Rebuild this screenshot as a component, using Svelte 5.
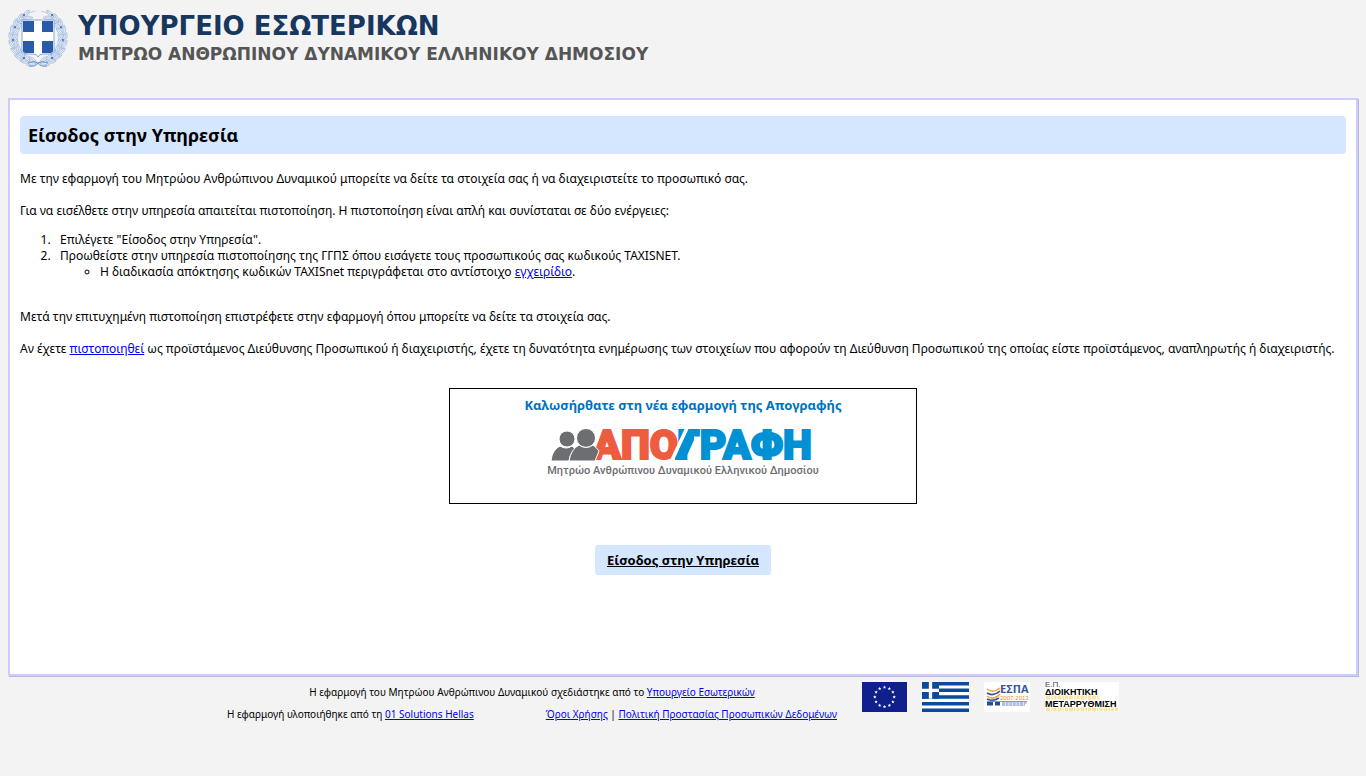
<script>
  const center = { x: 30, y: 30 };

  // Laurel leaves, mirrored on both sides of the shield
  const leaves = [];
  for (let i = 0; i < 10; i++) {
    const angle = 104 + i * 15.5;
    const rad = (angle * Math.PI) / 180;
    for (const [radius, tilt] of [[27, -22], [22.5, 24]]) {
      leaves.push({
        x: center.x + radius * Math.cos(rad),
        y: center.y + radius * Math.sin(rad),
        turn: angle + 90 + tilt
      });
    }
  }

  const stars = Array.from({ length: 12 }, (_, i) => {
    const cx = 22.5 + 9.7 * Math.sin((i * Math.PI) / 6);
    const cy = 15 - 9.7 * Math.cos((i * Math.PI) / 6);
    const points = Array.from({ length: 10 }, (_, k) => {
      const r = k % 2 ? 0.8 : 1.8;
      const a = (k * Math.PI) / 5;
      return `${(cx + r * Math.sin(a)).toFixed(2)},${(cy - r * Math.cos(a)).toFixed(2)}`;
    });
    return points.join(' ');
  });
</script>

<div class="page">
  <header>
    <svg class="emblem" viewBox="0 0 60 60" role="img" aria-label="Ελληνική Δημοκρατία">
      {#snippet branch()}
        <path d="M27 56 C12 55 4 45 4 31 C4 17 13 6 27 3" fill="none" stroke="#a9c0e2" stroke-width="0.8" />
        {#each leaves as leaf}
          <path
            d="M-5 0 Q0 -3.600 5 0 Q0 3.600 -5 0 M-3 0 H3"
            transform="translate({leaf.x} {leaf.y}) rotate({leaf.turn})"
            fill="#f0f3f9"
            stroke="#8dabd8"
            stroke-width="0.6"
          />
        {/each}
        <circle cx="16" cy="7" r="1" fill="#2f5fa8" />
        <circle cx="7" cy="19" r="0.9" fill="#2f5fa8" />
        <circle cx="5" cy="32" r="0.9" fill="#2f5fa8" />
        <circle cx="16" cy="50" r="1" fill="#2f5fa8" />
      {/snippet}
      {@render branch()}
      <g transform="translate(60 0) scale(-1 1)">{@render branch()}</g>
      <path d="M20 55 Q26 52 30 55 Q34 52 40 55 M21 58 Q28 59 30 55 Q32 59 39 58" fill="none" stroke="#6c92ca" />
      <path d="M14 12 H46 V44 Q45 46 41 46 H35 Q31 46 30 49 Q29 46 25 46 H19 Q15 46 14 44 Z" fill="#fff" stroke="#86a6d5" stroke-width="1" />
      <path d="M15 13 H26 V24 H15 Z M34 13 H45 V24 H34 Z M15 33 H26 V45 H19 Q15 45 15 43 Z M34 33 H45 V43 Q45 45 41 45 H34 Z" fill="#2a5ba8" />
    </svg>
    <div>
      <h1>ΥΠΟΥΡΓΕΙΟ ΕΣΩΤΕΡΙΚΩΝ</h1>
      <p class="subtitle">ΜΗΤΡΩΟ ΑΝΘΡΩΠΙΝΟΥ ΔΥΝΑΜΙΚΟΥ ΕΛΛΗΝΙΚΟΥ ΔΗΜΟΣΙΟΥ</p>
    </div>
  </header>

  <main>
    <h2>Είσοδος στην Υπηρεσία</h2>
    <p>Με την εφαρμογή του Μητρώου Ανθρώπινου Δυναμικού μπορείτε να δείτε τα στοιχεία σας ή να διαχειριστείτε το προσωπικό σας.</p>
    <p>Για να εισέλθετε στην υπηρεσία απαιτείται πιστοποίηση. Η πιστοποίηση είναι απλή και συνίσταται σε δύο ενέργειες:</p>
    <ol>
      <li>Επιλέγετε "Είσοδος στην Υπηρεσία".</li>
      <li>
        Προωθείστε στην υπηρεσία πιστοποίησης της ΓΓΠΣ όπου εισάγετε τους προσωπικούς σας κωδικούς TAXISNET.
        <ul>
          <li>Η διαδικασία απόκτησης κωδικών TAXISnet περιγράφεται στο αντίστοιχο <a href="#manual">εγχειρίδιο</a>.</li>
        </ul>
      </li>
    </ol>
    <p>Μετά την επιτυχημένη πιστοποίηση επιστρέφετε στην εφαρμογή όπου μπορείτε να δείτε τα στοιχεία σας.</p>
    <p>Αν έχετε <a href="#certified">πιστοποιηθεί</a> ως προϊστάμενος Διεύθυνσης Προσωπικού ή διαχειριστής, έχετε τη δυνατότητα ενημέρωσης των στοιχείων που αφορούν τη Διεύθυνση Προσωπικού της οποίας είστε προϊστάμενος, αναπληρωτής ή διαχειριστής.</p>

    <section class="banner">
      <h3>Καλωσήρθατε στη νέα εφαρμογή της Απογραφής</h3>
      <svg width="276" height="52" viewBox="-7 0 276 52" role="img" aria-label="Απογραφή">
        <text x="41" y="31" class="mark red">ΑΠΟ</text>
        <text x="125" y="31" class="mark blue">ΓΡΑΦΗ</text>
        <path d="M137 0 L123 30 L120 34 L118 32 L133 0 Z" fill="#fff" />
        <path d="M137 1 H142 V12 L133 32 H123 V30 Z" fill="#0090d4" />
        <g fill="#6d6e71" stroke="#fff" stroke-width="1">
          <circle cx="15" cy="11" r="8" />
          <path d="M-1 33 Q0 22 8 18 Q14 22 20 18 Q23 20 23 22 Q18 25 17 33 Z" />
          <circle cx="34" cy="10" r="9.500" />
          <path d="M17 33 Q19 21 27 17 Q34 22 41 17 Q45 20 47 23 L43 33 Z" />
        </g>
        <text x="131" y="46" class="tagline">Μητρώο Ανθρώπινου Δυναμικού Ελληνικού Δημοσίου</text>
      </svg>
    </section>

    <a class="enter" href="#login">Είσοδος στην Υπηρεσία</a>
  </main>

  <footer>
    <div class="credits">
      <p>Η εφαρμογή του Μητρώου Ανθρώπινου Δυναμικού σχεδιάστηκε από το <a href="#ministry">Υπουργείο Εσωτερικών</a></p>
      <div class="links">
        <span>Η εφαρμογή υλοποιήθηκε από τη <a href="#solutions">01 Solutions Hellas</a></span>
        <span><a href="#terms">Όροι Χρήσης</a> | <a href="#privacy">Πολιτική Προστασίας Προσωπικών Δεδομένων</a></span>
      </div>
    </div>
    <div class="logos">
      <svg width="45" height="30" viewBox="0 0 45 30" role="img" aria-label="Ευρωπαϊκή Ένωση">
        <rect width="45" height="30" fill="#0f1f8c" />
        {#each stars as points}
          <polygon {points} fill="#fff" />
        {/each}
      </svg>
      <svg width="47" height="30" viewBox="0 0 47 30" role="img" aria-label="Ελλάδα">
        <rect width="47" height="30" fill="#fff" />
        <path d="M0 1.700H47 M0 8.300H47 M0 15H47 M0 21.700H47 M0 28.300H47" stroke="#0b4a9c" stroke-width="3.400" />
        <rect width="17" height="16.700" fill="#0b4a9c" />
        <path d="M8.500 0V16.700 M0 8.300H17" stroke="#fff" stroke-width="3.300" />
      </svg>
      <svg width="46" height="30" viewBox="0 0 46 30" role="img" aria-label="ΕΣΠΑ 2007-2013">
        <rect width="46" height="30" fill="#fff" />
        <g fill="none" stroke-width="1.600">
          <path d="M3 7 Q9 12 16 6" stroke="#f3a43c" />
          <path d="M3 11 Q9 15 16 9" stroke="#35549b" />
          <path d="M3 14 Q9 19 16 12" stroke="#f3a43c" />
          <path d="M3 17 Q9 20 15 16" stroke="#35549b" />
        </g>
        <text x="16" y="11" class="espa">ΕΣΠΑ</text>
        <text x="16" y="18" class="years">2007-2013</text>
        <path d="M3 19.500H43" stroke="#35549b" stroke-width="0.6" />
        <path d="M3 20H9V23.500H3Z M11 20H16V23.500H11Z" fill="#2a4b9b" />
        <path d="M18 21H43 M18 23H41" stroke="#6680b5" stroke-dasharray="3 0.6" />
      </svg>
      <svg width="74" height="30" viewBox="0 0 74 30" role="img" aria-label="Ε.Π. Διοικητική Μεταρρύθμιση">
        <rect width="74" height="30" fill="#fff" />
        <path d="M1 15.500H55 M1 27.500H73" stroke="#fbe3a0" stroke-width="4" stroke-dasharray="4 1 1.500 1 3 1" />
        <text x="0" y="5" class="ep">Ε.Π.</text>
        <text x="0" y="13" class="reform">ΔΙΟΙΚΗΤΙΚΗ</text>
        <text x="0" y="25" class="reform">ΜΕΤΑΡΡΥΘΜΙΣΗ</text>
      </svg>
    </div>
  </footer>
</div>

<style>
  :global(body) {
    margin: 0;
    background: #f3f3f3;
  }

  .page {
    padding: 8px;
    font-family: "Noto Sans", sans-serif;
    font-size: 12px;
    line-height: 16px;
    color: #000;
  }

  h1, h2, h3, p, ol, ul {
    margin: 0;
  }

  a {
    color: #00e;
  }

  svg {
    overflow: visible;
  }

  header {
    display: flex;
    gap: 10px;
    height: 90px;
    font-family: "DejaVu Sans", sans-serif;
  }

  .emblem {
    width: 60px;
    height: 60px;
    flex: none;
  }

  h1 {
    color: #17375e;
    font-size: 26px;
    line-height: 36px;
  }

  .subtitle {
    color: #555;
    font-size: 17px;
    font-weight: bold;
    line-height: 20px;
  }

  main {
    display: flex;
    flex-direction: column;
    gap: 16px;
    padding: 16px 10px 99px;
    border: 2px solid #ccccff;
    background: #fff;
    box-shadow: 1px 1px 0 #b8b8e0;
  }

  h2 {
    margin-bottom: 1px;
    padding: 0 8px;
    border-radius: 4px;
    background: #d5e6ff;
    font-size: 18px;
    line-height: 38px;
  }

  ol {
    margin: -3px 0 13px;
    padding-left: 40px;
  }

  ol > li::marker {
    content: counter(list-item) ".\a0\a0\a0";
  }

  ul {
    padding-left: 40px;
  }

  ul > li::marker {
    content: normal;
  }

  .banner {
    display: flex;
    flex-direction: column;
    align-items: center;
    gap: 15px;
    box-sizing: border-box;
    width: 468px;
    max-width: 100%;
    min-height: 116px;
    margin: 15px auto 0;
    padding: 8px;
    border: 1px solid #000;
  }

  h3 {
    color: #0073bd;
    font-size: 13px;
  }

  .mark {
    font: 900 41px Roboto, sans-serif;
    stroke-width: 2px;
  }

  .red {
    fill: #ee5c3f;
    stroke: #ee5c3f;
  }

  .blue {
    fill: #0090d4;
    stroke: #0090d4;
  }

  .tagline {
    font: 500 11px Roboto, sans-serif;
    fill: #6d6e71;
    text-anchor: middle;
  }

  .enter {
    align-self: center;
    margin-top: 25px;
    padding: 0 12px;
    border-radius: 2px;
    background: #d5e6ff;
    color: #000;
    font-size: 13px;
    font-weight: bold;
    line-height: 30px;
  }

  footer {
    display: flex;
    justify-content: center;
    gap: 25px;
    padding: 6px 20px 0 0;
    font-size: 10px;
  }

  .credits {
    display: flex;
    flex-direction: column;
    gap: 6px;
    width: 610px;
    padding-top: 2px;
    text-align: center;
  }

  .links {
    display: flex;
    justify-content: space-between;
  }

  .logos {
    display: flex;
    gap: 15px;
  }

  .espa {
    font: bold 11px "Open Sans", sans-serif;
    fill: #35549b;
  }

  .years {
    font: 6px "Liberation Sans", sans-serif;
    fill: #f08a2c;
  }

  .ep {
    font: 8px "Liberation Sans", sans-serif;
    fill: #444;
  }

  .reform {
    font: bold 9px "Liberation Sans", sans-serif;
  }
</style>
